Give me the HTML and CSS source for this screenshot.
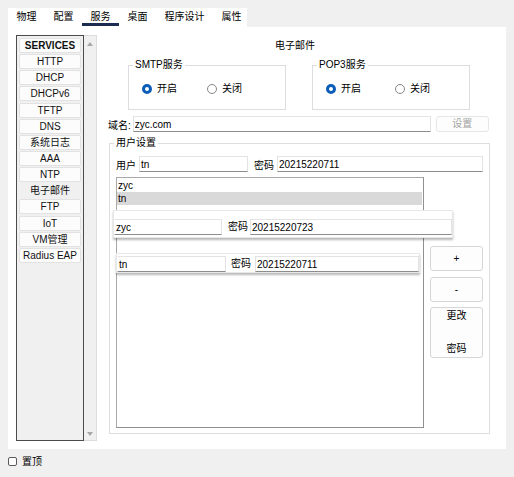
FILE: index.html
```html
<!DOCTYPE html>
<html lang="zh">
<head>
    <meta charset="UTF-8">
    <title>Server</title>
    <link rel="stylesheet" href="styles.css">
</head>
<body>
    <div class="tabs">
        <span class="tab">物理</span>
        <span class="tab">配置</span>
        <span class="tab active">服务</span>
        <span class="tab">桌面</span>
        <span class="tab">程序设计</span>
        <span class="tab">属性</span>
    </div>
    <div class="window">
        <div class="sidebar">
            <div class="svc-list">
                <div class="svc head">SERVICES</div>
                <div class="svc">HTTP</div>
                <div class="svc">DHCP</div>
                <div class="svc">DHCPv6</div>
                <div class="svc">TFTP</div>
                <div class="svc">DNS</div>
                <div class="svc">系统日志</div>
                <div class="svc">AAA</div>
                <div class="svc">NTP</div>
                <div class="svc cur">电子邮件</div>
                <div class="svc">FTP</div>
                <div class="svc">IoT</div>
                <div class="svc">VM管理</div>
                <div class="svc">Radius EAP</div>
            </div>
            <div class="scroll">
                <span class="arrow up"></span>
                <span class="arrow down"></span>
            </div>
        </div>
        <div class="content">
            <div class="title">电子邮件</div>
            <div class="services">
                <fieldset class="group">
                    <legend>SMTP服务</legend>
                    <div class="radios">
                        <span class="opt"><span class="radio on"></span>开启</span>
                        <span class="opt"><span class="radio"></span>关闭</span>
                    </div>
                </fieldset>
                <fieldset class="group">
                    <legend>POP3服务</legend>
                    <div class="radios wide">
                        <span class="opt"><span class="radio on"></span>开启</span>
                        <span class="opt"><span class="radio"></span>关闭</span>
                    </div>
                </fieldset>
            </div>
            <div class="domain-row">
                <span class="lbl">域名:</span>
                <input class="field domain" type="text" value="zyc.com">
                <span class="btn set">设置</span>
            </div>
            <fieldset class="users">
                <legend>用户设置</legend>
                <div class="users-body">
                    <div class="user-row">
                        <span class="lbl">用户</span>
                        <input class="field uname" type="text" value="tn">
                        <span class="lbl pw">密码</span>
                        <input class="field upass" type="text" value="20215220711">
                    </div>
                    <div class="list-area">
                        <div class="mail-list">
                            <div class="item">zyc</div>
                            <div class="item sel">tn</div>
                            <!-- rows being edited, drawn over the list -->
                            <div class="ghost g1">
                                <input class="field gname" type="text" value="zyc">
                                <span class="lbl">密码</span>
                                <input class="field gpass" type="text" value="20215220723">
                            </div>
                            <div class="ghost g2">
                                <input class="field gname" type="text" value="tn">
                                <span class="lbl">密码</span>
                                <input class="field gpass" type="text" value="20215220711">
                            </div>
                        </div>
                        <div class="side-btns">
                            <span class="btn add">+</span>
                            <span class="btn del">-</span>
                            <span class="btn change">更改<br><br>密码</span>
                        </div>
                    </div>
                </div>
            </fieldset>
        </div>
    </div>
    <div class="pin"><span class="check"></span>置顶</div>
</body>
</html>
```

FILE: styles.css
```css
* {
    margin: 0;
    padding: 0;
    box-sizing: border-box;
}
body {
    background-color: #f0f0f0;
    font-family: "Liberation Sans", "Noto Sans CJK SC", sans-serif;
    font-size: 10px;
    color: #000;
}
input {
    font: inherit;
    color: #000;
    outline: none;
}

/* tab bar */
.tabs {
    margin: 8px 0 0 8px;
    width: 239px;
    height: 19px;
    background-color: #fff;
    display: flex;
    white-space: nowrap;
}
.tab {
    height: 18px;
    padding: 3px 8.5px 0;
    line-height: 12px;
    border-bottom: 3px solid transparent;
}
.tab.active {
    border-bottom-color: #1b2b52;
}

/* white panel */
.window {
    margin-left: 8px;
    width: 498px;
    height: 422px;
    background-color: #fff;
    display: flex;
    padding: 8px 0 0 8px;
}

/* services list */
.sidebar {
    width: 81px;
    height: 406px;
    display: flex;
}
.svc-list {
    width: 68px;
    height: 406px;
    border: 1px solid #4b4b4b;
    background-color: #f0f0f0;
    padding: 2px 2px 0;
}
.svc {
    height: 15px;
    margin-bottom: 1.15px;
    line-height: 13px;
    text-align: center;
    background-color: #fcfcfc;
    border: 1px solid #e2e2e2;
    border-radius: 2px;
    color: #111;
}
.svc.head {
    font-weight: bold;
}
.svc.cur {
    background-color: #f0f0f0;
    border-color: #f0f0f0;
}
.scroll {
    width: 13px;
    height: 406px;
    border: 1px solid #dcdcdc;
    border-left: none;
    background-color: #f0f0f0;
    display: flex;
    flex-direction: column;
    justify-content: space-between;
    align-items: center;
    padding: 6px 0 4px;
}
.arrow {
    width: 0;
    height: 0;
    border-left: 3px solid transparent;
    border-right: 3px solid transparent;
}
.arrow.up {
    border-bottom: 4px solid #a8a8a8;
}
.arrow.down {
    border-top: 4px solid #a8a8a8;
}

/* right side */
.content {
    margin-left: 3px;
    width: 390px;
}
.title {
    padding-top: 4px;
    line-height: 14px;
    text-align: center;
}
.services {
    display: flex;
    margin-top: 6px;
    padding-left: 28px;
    gap: 26px;
}
fieldset {
    border: 1px solid #dddddd;
    min-width: 0;
}
legend {
    margin-left: 4px;
    padding: 0 2px;
    line-height: 12px;
}
.group {
    width: 158px;
}
.radios {
    display: flex;
    padding: 12px 0 14px 13px;
    line-height: 12px;
}
.opt {
    display: flex;
    align-items: center;
    gap: 5px;
}
.opt + .opt {
    margin-left: 30px;
}
.radios.wide .opt + .opt {
    margin-left: 34px;
}
.radio {
    width: 10px;
    height: 10px;
    border-radius: 50%;
    border: 1px solid #868686;
    background-color: #fff;
}
.radio.on {
    border: 3px solid #0b5cb8;
}

.domain-row {
    display: flex;
    align-items: center;
    height: 16px;
    margin-top: 6px;
    padding-left: 8px;
}
.field {
    height: 16px;
    border: 1px solid #e3e3e3;
    border-bottom-color: #8c8c8c;
    padding: 0 1px;
    background-color: #fff;
}
.domain {
    margin-left: 2px;
    width: 298px;
}
.btn {
    display: block;
    text-align: center;
    background-color: #fdfdfd;
    border: 1px solid #d6d6d6;
    border-radius: 3px;
}
.set {
    margin-left: 5px;
    width: 53px;
    height: 16px;
    line-height: 14px;
    color: #a2a2a2;
    border-color: #e6e6e6;
}

/* user settings */
.users {
    margin: 5px 0 0 9px;
    width: 381px;
}
.users-body {
    padding: 7px 6px 5px 6px;
}
.user-row {
    display: flex;
    align-items: center;
    height: 16px;
}
.uname {
    margin-left: 3px;
    width: 109px;
}
.lbl.pw {
    margin-left: 6px;
}
.upass {
    margin-left: 3px;
    width: 206px;
}
.list-area {
    display: flex;
    margin-top: 5px;
}
.mail-list {
    position: relative;
    width: 308px;
    height: 251px;
    border: 1px solid #a8a8a8;
    border-right-color: #909090;
    border-bottom-color: #909090;
    padding-top: 1px;
}
.item {
    height: 13px;
    line-height: 13px;
    padding-left: 1px;
}
.item.sel {
    background-color: #d9d9d9;
    margin-right: 1px;
}
.ghost {
    position: absolute;
    display: flex;
    align-items: flex-start;
    background-color: #fff;
    border: 1px solid #e8e8e8;
    box-shadow: 0 2px 2px rgba(0, 0, 0, 0.28);
}
.ghost .lbl {
    line-height: 16px;
}
.ghost .gpass {
    flex: 1;
}
.g1 {
    left: -4px;
    top: 32px;
    width: 340px;
    height: 28px;
    padding-top: 8px;
}
.g1 .gname {
    width: 108px;
    border-left-color: #fff;
}
.g1 .lbl {
    margin-left: 6px;
}
.g1 .gpass {
    margin-left: 2px;
}
.g2 {
    left: -1px;
    top: 75px;
    width: 304px;
    height: 20px;
    padding-top: 2px;
}
.g2 .gname {
    width: 109px;
    border-left-color: #fff;
}
.g2 .lbl {
    margin-left: 5px;
}
.g2 .gpass {
    margin-left: 4px;
}
.side-btns {
    margin: 69px 0 0 6px;
    width: 53px;
    display: flex;
    flex-direction: column;
}
.add,
.del {
    height: 25px;
    line-height: 23px;
}
.del {
    margin-top: 6px;
}
.change {
    margin-top: 5px;
    height: 51px;
    line-height: 16.5px;
}

/* bottom */
.pin {
    display: flex;
    align-items: center;
    gap: 5px;
    height: 9px;
    margin-top: 8px;
    padding-left: 8px;
    line-height: 12px;
}
.check {
    width: 9px;
    height: 9px;
    border: 1px solid #5a5a5a;
    border-radius: 2px;
    background-color: #fff;
}
```
